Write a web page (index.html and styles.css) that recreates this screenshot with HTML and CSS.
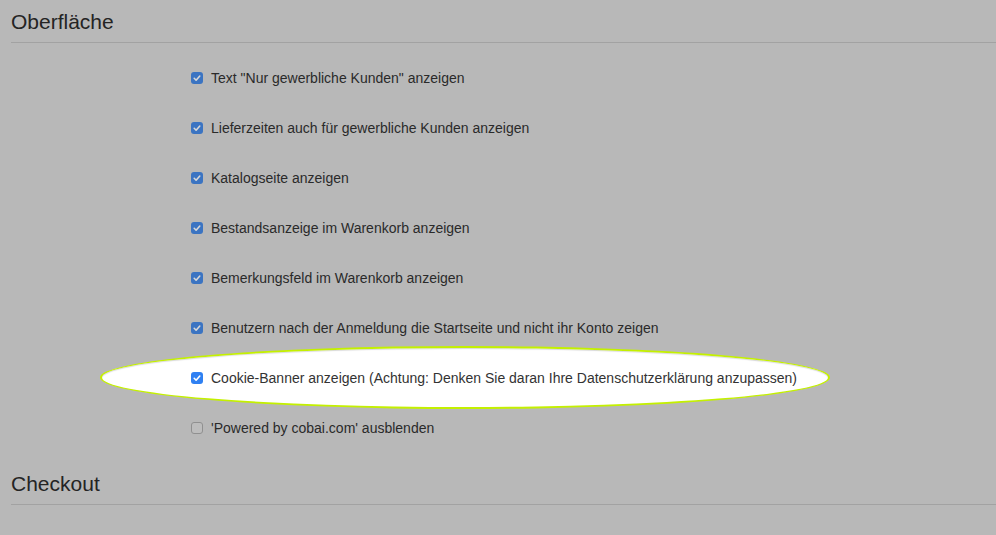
FILE: index.html
```html
<!DOCTYPE html>
<html lang="de">
<head>
    <meta charset="UTF-8">
    <meta name="viewport" content="width=device-width, initial-scale=1.0">
    <title>Einstellungen</title>
    <link rel="stylesheet" href="styles.css">
</head>
<body>
    <section class="settings">
        <h2 class="section-title">Oberfläche</h2>
        <ul class="options">
            <li class="option"><span class="box checked"></span>Text "Nur gewerbliche Kunden" anzeigen</li>
            <li class="option"><span class="box checked"></span>Lieferzeiten auch für gewerbliche Kunden anzeigen</li>
            <li class="option"><span class="box checked"></span>Katalogseite anzeigen</li>
            <li class="option"><span class="box checked"></span>Bestandsanzeige im Warenkorb anzeigen</li>
            <li class="option"><span class="box checked"></span>Bemerkungsfeld im Warenkorb anzeigen</li>
            <li class="option"><span class="box checked"></span>Benutzern nach der Anmeldung die Startseite und nicht ihr Konto zeigen</li>
            <li class="option highlight">
                <span class="spot"></span>
                <span class="box checked"></span><span class="label">Cookie-Banner anzeigen (Achtung: Denken Sie daran Ihre Datenschutzerklärung anzupassen)</span>
            </li>
            <li class="option"><span class="box"></span>'Powered by cobai.com' ausblenden</li>
        </ul>
    </section>
    <section class="settings next">
        <h2 class="section-title">Checkout</h2>
    </section>
</body>
</html>
```

FILE: styles.css
```css
body {
    margin: 0;
    padding: 0;
    background-color: #b8b8b8;
    font-family: "Liberation Sans", Arial, sans-serif;
    color: #2a2a2a;
    overflow: hidden;
}
.settings {
    margin-left: 11px;
}
.next {
    margin-top: 9px;
}
.section-title {
    margin: 0;
    padding: 10px 0 8px;
    font-size: 21px;
    line-height: 24px;
    font-weight: normal;
    color: #242424;
    border-bottom: 1px solid #a2a2a2;
}
.options {
    list-style: none;
    margin: 10px 0 0;
    padding: 0 0 0 180px;
}
.option {
    display: flex;
    align-items: center;
    height: 50px;
    font-size: 14px;
}
.box {
    width: 12px;
    height: 12px;
    box-sizing: border-box;
    margin-right: 8px;
    border: 1px solid #909090;
    border-radius: 3px;
    background: #bdbdbd;
    flex-shrink: 0;
}
.box.checked {
    border: 0;
    background: #3b74c2 url("data:image/svg+xml,%3Csvg xmlns='http://www.w3.org/2000/svg' viewBox='0 0 12 12'%3E%3Cpath d='M3.2 6.3l1.9 1.9 3.7-4.2' fill='none' stroke='%23d8d8d8' stroke-width='1.6' stroke-linecap='round' stroke-linejoin='round'/%3E%3C/svg%3E") center / 12px 12px no-repeat;
}
.highlight {
    position: relative;
    color: #333;
}
.highlight .box.checked {
    background-color: #2f80f2;
    background-image: url("data:image/svg+xml,%3Csvg xmlns='http://www.w3.org/2000/svg' viewBox='0 0 12 12'%3E%3Cpath d='M3.2 6.3l1.9 1.9 3.7-4.2' fill='none' stroke='%23ffffff' stroke-width='1.6' stroke-linecap='round' stroke-linejoin='round'/%3E%3C/svg%3E");
}
.highlight .box,
.highlight .label {
    position: relative;
    z-index: 1;
}
.spot {
    position: absolute;
    left: -91px;
    top: -7px;
    width: 730px;
    height: 63px;
    box-sizing: border-box;
    background: #ffffff;
    border: 2px solid #c4f000;
    border-radius: 50%;
    box-shadow: inset 0 1px 1px rgba(0, 0, 0, 0.15);
}
```
